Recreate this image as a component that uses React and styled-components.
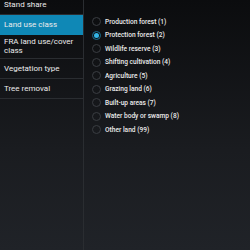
import React from 'react'
import styled, { createGlobalStyle } from 'styled-components'

const GlobalStyle = createGlobalStyle`
  html, body {
    margin: 0;
    padding: 0;
    background: #0d0e10;
  }
  body {
    font-family: Roboto, "Liberation Sans", sans-serif;
  }
`

const Screen = styled.div`
  width: 250px;
  height: 250px;
  overflow: hidden;
  display: flex;
  background: linear-gradient(180deg, #0b0c0e 0%, #1a1c20 60%, #202328 100%);
`

const Sidebar = styled.div`
  width: 83px;
  flex-shrink: 0;
  border-right: 1px solid #2a2d31;
  display: flex;
  flex-direction: column;
  margin-top: -5px;
`

const NavItem = styled.div`
  min-height: 20px;
  padding: 2px 4px 3px 4px;
  box-sizing: border-box;
  display: flex;
  align-items: center;
  font-size: 8px;
  line-height: 9px;
  color: #ececec;
  background: ${({ active }) => (active ? '#0f88b6' : 'transparent')};
  border-bottom: 1px solid ${({ active }) => (active ? '#0f88b6' : '#2a2d31')};
`

const Options = styled.div`
  flex: 1;
  display: flex;
  flex-direction: column;
  padding: 15px 0 0 8px;
`

const Option = styled.div`
  height: 13.5px;
  display: flex;
  align-items: center;
  gap: 4px;
  font-size: 6.6px;
  font-weight: 500;
  color: #ececec;
`

const Radio = styled.span`
  width: 7px;
  height: 7px;
  border-radius: 50%;
  border: 1px solid ${({ checked }) => (checked ? '#1a6f8f' : '#3a3d42')};
  display: flex;
  align-items: center;
  justify-content: center;
  flex-shrink: 0;
  &::after {
    content: '';
    display: ${({ checked }) => (checked ? 'block' : 'none')};
    width: 5px;
    height: 5px;
    border-radius: 50%;
    background: #33b5e5;
  }
`

const navItems = ['Stand share', 'Land use class', 'FRA land use/cover class', 'Vegetation type', 'Tree removal']
const options = [
  'Production forest (1)',
  'Protection forest (2)',
  'Wildlife reserve (3)',
  'Shifting cultivation (4)',
  'Agriculture (5)',
  'Grazing land (6)',
  'Built-up areas (7)',
  'Water body or swamp (8)',
  'Other land (99)',
]

const App = () => {
  return (
    <>
      <GlobalStyle />
      <Screen>
        <Sidebar>
          {navItems.map((item) => (
            <NavItem key={item} active={item === 'Land use class'}>{item}</NavItem>
          ))}
        </Sidebar>
        <Options>
          {options.map((opt) => (
            <Option key={opt}>
              <Radio checked={opt === 'Protection forest (2)'} />
              {opt}
            </Option>
          ))}
        </Options>
      </Screen>
    </>
  )
}

export default App
